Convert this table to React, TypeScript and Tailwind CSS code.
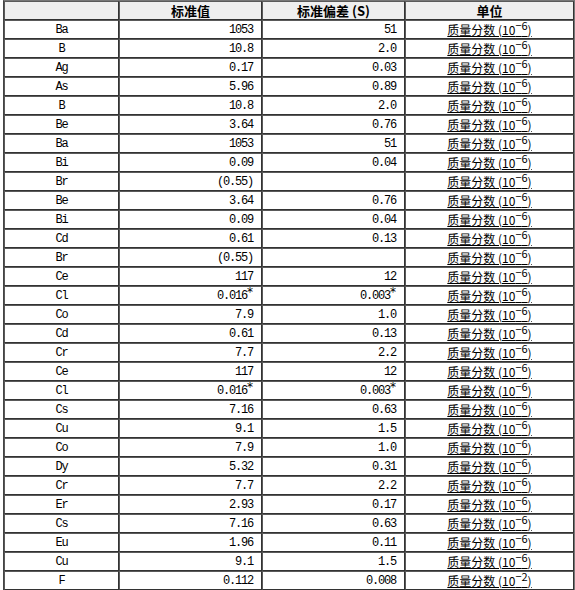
const rows: [string, string, string, string][] = [
  ["Ba", "1053", "51", "6"],
  ["B", "10.8", "2.0", "6"],
  ["Ag", "0.17", "0.03", "6"],
  ["As", "5.96", "0.89", "6"],
  ["B", "10.8", "2.0", "6"],
  ["Be", "3.64", "0.76", "6"],
  ["Ba", "1053", "51", "6"],
  ["Bi", "0.09", "0.04", "6"],
  ["Br", "(0.55)", "", "6"],
  ["Be", "3.64", "0.76", "6"],
  ["Bi", "0.09", "0.04", "6"],
  ["Cd", "0.61", "0.13", "6"],
  ["Br", "(0.55)", "", "6"],
  ["Ce", "117", "12", "6"],
  ["Cl", "0.016*", "0.003*", "6"],
  ["Co", "7.9", "1.0", "6"],
  ["Cd", "0.61", "0.13", "6"],
  ["Cr", "7.7", "2.2", "6"],
  ["Ce", "117", "12", "6"],
  ["Cl", "0.016*", "0.003*", "6"],
  ["Cs", "7.16", "0.63", "6"],
  ["Cu", "9.1", "1.5", "6"],
  ["Co", "7.9", "1.0", "6"],
  ["Dy", "5.32", "0.31", "6"],
  ["Cr", "7.7", "2.2", "6"],
  ["Er", "2.93", "0.17", "6"],
  ["Cs", "7.16", "0.63", "6"],
  ["Eu", "1.96", "0.11", "6"],
  ["Cu", "9.1", "1.5", "6"],
  ["F", "0.112", "0.008", "2"],
];

// values with a trailing * get it as a superscript
function Num({ v }: { v: string }) {
  if (v.endsWith("*")) {
    return (
      <>
        {v.slice(0, -1)}
        <sup className="text-[12px] tracking-normal top-[-0.25em]" style={{ fontFamily: '"DejaVu Sans", sans-serif' }}>*</sup>
      </>
    );
  }
  return <>{v}</>;
}

const mono = { fontFamily: '"Liberation Mono", "Noto Sans CJK SC", monospace' };
const cjk = { fontFamily: '"Noto Sans CJK SC", "Liberation Sans", sans-serif' };

const cell = "border border-t-[#5a5a5a] border-l-[#5a5a5a] border-b-[#333] border-r-[#333] h-[19px] p-0 leading-none";

export default function App() {
  return (
    <div className="w-[575px] h-[590px] overflow-hidden bg-white text-black">
      <table className="ml-[3px] w-[572px] border-separate border-spacing-0 border border-t-[#777] border-l-[#444] border-b-[#333] border-r-[#777] table-fixed">
        <colgroup>
          <col className="w-[115px]" />
          <col className="w-[143px]" />
          <col className="w-[143px]" />
          <col />
        </colgroup>
        <thead>
          <tr className="bg-[#efefef]">
            <th className={cell}></th>
            <th className={cell + " text-[13px] font-bold text-center"} style={cjk}>标准值</th>
            <th className={cell + " text-[13px] font-bold text-center"} style={cjk}>标准偏差 (S)</th>
            <th className={cell + " text-[13px] font-bold text-center"} style={cjk}>单位</th>
          </tr>
        </thead>
        <tbody>
          {rows.map(([el, val, sd, exp], i) => (
            <tr key={i}>
              <td className={cell + " text-center text-[12px] tracking-[-1.2px]"} style={mono}>{el}</td>
              <td className={cell + " text-right pr-[8px] text-[12px] tracking-[-1.2px]"} style={mono}>
                <Num v={val} />
              </td>
              <td className={cell + " text-right pr-[8px] text-[12px] tracking-[-1.2px]"} style={mono}>
                <Num v={sd} />
              </td>
              <td className={cell + " text-center text-[12px]"} style={cjk}>
                <span className="underline underline-offset-[1px]">
                  质量分数 (10<sup className="text-[11px] top-[-0.4em]">−{exp}</sup>)
                </span>
              </td>
            </tr>
          ))}
        </tbody>
      </table>
    </div>
  );
}
